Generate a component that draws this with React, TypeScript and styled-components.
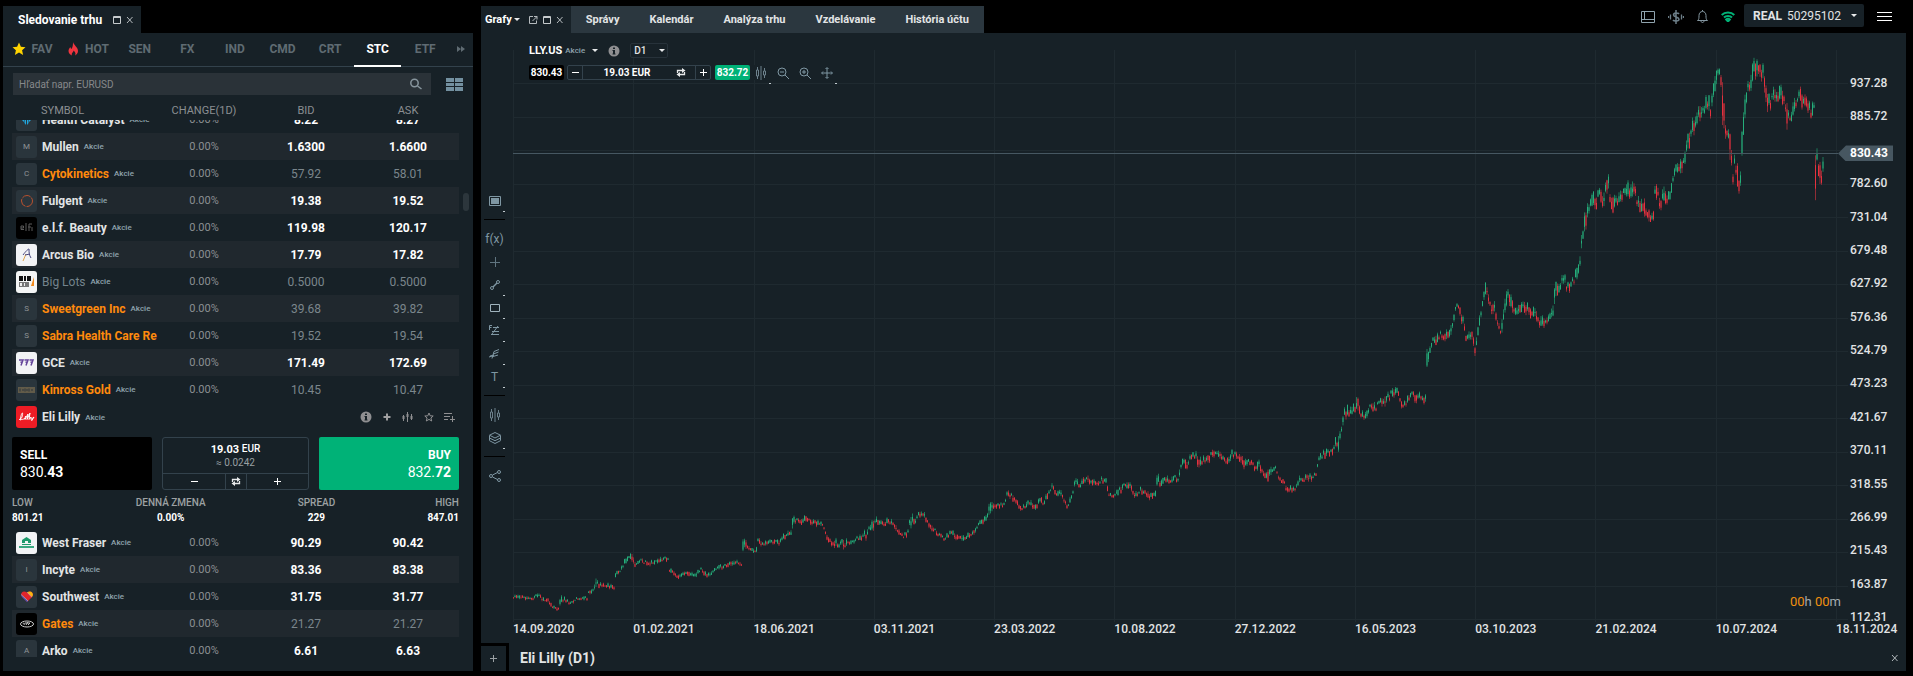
import React, { useLayoutEffect, useMemo, useRef } from "react";
import styled, { createGlobalStyle, css } from "styled-components";

const c = {
  panel: "#172127",
  row: "#20282e",
  tab: "#2b373f",
  line: "#33424c",
  text: "#e2e4e5",
  muted: "#7b868c",
  steel: "#7f97a3",
  orange: "#ff8a0d",
  green: "#00b277",
};

const GlobalStyle = createGlobalStyle`
  * { box-sizing: border-box; }
  body { margin: 0; background: #000; }
  body, button, input, select {
    font-family: Roboto, "Liberation Sans", sans-serif;
    font-size: 12px;
    color: ${c.text};
  }
  button { background: none; border: 0; padding: 0; cursor: pointer; }
  a { color: inherit; text-decoration: none; }
  svg { display: block; flex: none; }
`;

/* ---------- layout ---------- */

const Page = styled.div`
  display: grid;
  grid-template-columns: 470px minmax(0, 1fr);
  column-gap: 8px;
  height: 100vh;
  min-height: 600px;
  padding: 0 7px 5px 3px;
`;

const Column = styled.section`
  display: flex;
  flex-direction: column;
  min-width: 0;
  min-height: 0;
`;

const Head = styled.header`
  display: flex;
  align-items: flex-end;
  height: 33px;
  flex: none;
`;

const Panel = styled.div`
  position: relative;
  display: flex;
  flex-direction: column;
  flex: 1;
  min-height: 0;
  background: ${c.panel};
`;

const WindowTab = styled.div<{ $wide?: boolean }>`
  display: flex;
  align-items: center;
  gap: ${(p) => (p.$wide ? "11px" : "4px")};
  height: 27px;
  padding: 0 7px 0 ${(p) => (p.$wide ? "15px" : "4px")};
  background: ${c.panel};
  font-weight: 700;
`;

const TabTools = styled.div`
  display: flex;
  align-items: center;
  gap: 5px;
`;

const TabName = styled.button`
  display: flex;
  align-items: center;
  gap: 2px;
  margin-right: 6px;
  font-size: 11px;
  font-weight: 700;
  color: #fff;
`;

const TabTitle = styled.h1`
  margin: 0;
  font-size: 12px;
  font-weight: 700;
  color: #fff;
`;

/* ---------- market watch ---------- */

const Groups = styled.nav`
  display: flex;
  height: 34px;
  border-bottom: 1px solid ${c.line};
`;

const Group = styled.button<{ $active?: boolean; $width?: number }>`
  display: flex;
  align-items: center;
  justify-content: center;
  gap: 6px;
  ${(p) => (p.$width ? css`width: ${p.$width}px;` : css`flex: 1;`)}
  height: 34px;
  border-bottom: 2px solid ${(p) => (p.$active ? "#fff" : "transparent")};
  color: ${(p) => (p.$active ? "#fff" : "#5f6b72")};
  font-weight: 700;
`;

const SearchRow = styled.div`
  display: flex;
  align-items: center;
  gap: 15px;
  padding: 6px 10px 3px;
`;

const SearchBox = styled.label`
  display: flex;
  align-items: center;
  flex: 1;
  height: 22px;
  padding: 0 9px 0 6px;
  background: #2a3238;
`;

const SearchInput = styled.input`
  flex: 1;
  min-width: 0;
  border: 0;
  padding: 0;
  outline: 0;
  background: none;
  font-size: 10px;
  &::placeholder { color: #87898b; opacity: 1; }
`;

const Scroller = styled.div`
  flex: 1;
  min-height: 0;
  overflow: hidden;
  margin: 0 14px 14px 9px;
`;

const Thumb = styled.div`
  position: absolute;
  right: 4px;
  top: 160px;
  width: 6px;
  height: 18px;
  border-radius: 3px;
  background: #2c363c;
`;

const Quotes = styled.table`
  width: 100%;
  border-collapse: collapse;
  table-layout: fixed;
`;

const HeadCell = styled.th<{ $first?: boolean }>`
  position: sticky;
  top: 0;
  z-index: 1;
  width: ${(p) => (p.$first ? "141px" : "auto")};
  height: 22px;
  padding: 2px 0 0 ${(p) => (p.$first ? "29px" : "0")};
  background: ${c.panel};
  color: #8b8f92;
  font-size: 11px;
  font-weight: 400;
  text-align: ${(p) => (p.$first ? "left" : "center")};
`;

const Row = styled.tr<{ $alt?: boolean }>`
  height: 27px;
  background: ${(p) => (p.$alt ? c.row : "transparent")};
`;

const Cell = styled.td<{ $strong?: boolean }>`
  height: 27px;
  padding: 0;
  color: ${(p) => (p.$strong ? "#fff" : c.muted)};
  font-weight: ${(p) => (p.$strong ? 700 : 400)};
  text-align: center;
  line-height: 14px;
`;

const ChangeCell = styled(Cell)`
  font-size: 11px;
  color: #8b8f92;
`;

const SymbolBox = styled.div`
  display: flex;
  align-items: center;
  gap: 5px;
  padding-left: 4px;
  white-space: nowrap;
`;

const SymbolName = styled.span<{ $tone: Tone }>`
  font-size: 12px;
  line-height: 16px;
  font-weight: ${(p) => (p.$tone === "dim" ? 400 : 700)};
  color: ${(p) => (p.$tone === "orange" ? c.orange : p.$tone === "dim" ? "#74848d" : c.text)};
`;

const Kind = styled.span`
  padding-top: 1px;
  color: #8fa3ad;
  font-size: 8px;
  font-weight: 500;
  line-height: 12px;
`;

const Logo = styled.span<{ $bg?: string }>`
  display: flex;
  align-items: center;
  justify-content: center;
  flex: none;
  width: 21px;
  height: 22px;
  border-radius: 3px;
  background: ${(p) => p.$bg ?? "#2a353c"};
  color: #8f9496;
  font-size: 8px;
`;

const Details = styled.div`
  display: flex;
  flex-direction: column;
  height: 126px;
`;

const DetailsHead = styled.div`
  display: flex;
  align-items: center;
  justify-content: space-between;
  height: 28px;
`;

const Actions = styled.div`
  display: flex;
  align-items: center;
  gap: 2px;
`;

const IconButton = styled.button<{ $size?: number }>`
  display: flex;
  align-items: center;
  justify-content: center;
  width: ${(p) => p.$size ?? 19}px;
  height: 20px;
`;

const Deal = styled.div`
  display: grid;
  grid-template-columns: 140px 1fr 140px;
  gap: 10px;
  height: 53px;
  margin-top: 6px;
`;

const DealButton = styled.button<{ $buy?: boolean }>`
  display: flex;
  flex-direction: column;
  justify-content: center;
  align-items: ${(p) => (p.$buy ? "flex-end" : "flex-start")};
  padding: 0 8px;
  border-radius: 2px;
  background: ${(p) => (p.$buy ? c.green : "#000")};
  color: #fff;
`;

const Side = styled.span`
  font-size: 12px;
  font-weight: 700;
  line-height: 17px;
`;

const Price = styled.span`
  font-size: 14px;
  line-height: 17px;
`;

const Volume = styled.div`
  display: flex;
  flex-direction: column;
  border: 1px solid ${c.line};
  border-radius: 3px;
`;

const VolumeLine = styled.label`
  display: flex;
  justify-content: center;
  align-items: center;
  gap: 3px;
  height: 16px;
  margin-top: 3px;
  color: #fff;
  font-size: 10px;
  font-weight: 500;
`;

const VolumeInput = styled.input`
  width: 28px;
  padding: 0;
  border: 0;
  background: none;
  color: #fff;
  font-size: 11px;
  font-weight: 700;
  text-align: right;
`;

const Approx = styled.div`
  flex: 1;
  color: #9aa0a3;
  font-size: 10px;
  line-height: 11px;
  text-align: center;
`;

const Steps = styled.div`
  display: grid;
  grid-template-columns: 1fr 21px 1fr;
  height: 16px;
  border-top: 1px solid ${c.line};
`;

const Step = styled.button`
  display: flex;
  align-items: center;
  justify-content: center;
  & + & { border-left: 1px solid ${c.line}; }
`;

const Stats = styled.dl`
  display: flex;
  justify-content: space-between;
  margin: 5px 0 0;
  text-align: center;
`;

const Stat = styled.div<{ $align?: "left" | "right" }>`
  text-align: ${(p) => p.$align ?? "center"};
  dt { color: #9da1a3; font-size: 10px; font-weight: 500; line-height: 16px; }
  dd { margin: 0; color: #fff; font-size: 10px; font-weight: 700; line-height: 14px; }
`;

/* ---------- chart window ---------- */

const NavTabs = styled.nav`
  display: flex;
  height: 27px;
  background: ${c.tab};
  white-space: nowrap;
`;

const NavTab = styled.a`
  display: flex;
  align-items: center;
  padding: 0 15px;
  font-size: 11px;
  font-weight: 700;
`;

const TopTools = styled.div`
  display: flex;
  align-items: center;
  gap: 13px;
  height: 33px;
  margin-left: auto;
  padding-right: 14px;
`;

const Account = styled.button`
  display: flex;
  align-items: center;
  gap: 5px;
  width: 120px;
  height: 23px;
  margin: 0 0 2px -4px;
  padding: 0 7px 0 9px;
  border-radius: 2px;
  background: ${c.panel};
  & > svg { margin-left: auto; }
`;

const ChartBody = styled.div`
  display: flex;
  flex: 1;
  min-height: 0;
`;

const ToolColumn = styled.div`
  display: flex;
  flex-direction: column;
  justify-content: center;
  width: 32px;
  padding: 0 8px 0 3px;
`;

const Tool = styled.button<{ $more?: boolean }>`
  position: relative;
  display: flex;
  align-items: center;
  justify-content: center;
  height: 23px;
  width: 21px;
  color: ${c.steel};
  font-size: 12px;
  ${(p) => p.$more && css`
    &::after {
      content: "";
      position: absolute;
      right: 0;
      bottom: 0;
      width: 2px;
      height: 1px;
      background: #c3ccd0;
    }
  `}
`;

const Divider = styled.hr`
  width: 21px;
  height: 1px;
  margin: 7px 0;
  border: 0;
  background: #000;
`;

const Chart = styled.div`
  position: relative;
  display: grid;
  grid-template-columns: minmax(0, 1fr) 58px;
  grid-template-rows: minmax(0, 1fr) 21px;
  flex: 1;
  min-width: 0;
  margin-top: 17px;
`;

const Plot = styled.svg`
  width: 100%;
  height: 100%;
`;

const Prices = styled.div`
  grid-area: 1 / 2 / 3 / 3;
  display: flex;
  flex-direction: column;
  justify-content: space-between;
  padding: 27px 0 20px 2px;
  font-weight: 500;
  line-height: 12px;
`;

const PriceMark = styled.div`
  position: absolute;
  left: 0;
  right: 13px;
  display: flex;
  align-items: center;
  height: 16px;
  margin-top: -7px;
  &::before { content: ""; flex: 1; height: 1px; background: #465761; }
`;

const PriceTag = styled.span`
  width: 55px;
  height: 16px;
  padding-left: 12px;
  background: #475761;
  clip-path: polygon(0 50%, 8px 0, 100% 0, 100% 100%, 8px 100%);
  color: #fff;
  font-weight: 700;
  line-height: 16px;
`;

const Dates = styled.div`
  grid-area: 2 / 1 / 3 / 3;
  display: grid;
  grid-template-columns: repeat(11, minmax(0, 1fr)) 70px;
  padding-top: 1px;
  font-weight: 500;
  line-height: 12px;
  white-space: nowrap;
`;

const Countdown = styled.div`
  position: absolute;
  right: 65px;
  bottom: 33px;
  color: #a4acb0;
  font-size: 13px;
  line-height: 16px;
  b { color: #f0900f; font-weight: 400; }
`;

const Overlay = styled.div`
  position: absolute;
  left: 16px;
  top: -7px;
  display: flex;
  flex-direction: column;
  align-items: flex-start;
  gap: 7px;
`;

const OverlayRow = styled.div`
  display: flex;
  align-items: center;
  height: 15px;
  background: ${c.panel};
`;

const Instrument = styled.button`
  display: flex;
  align-items: center;
  gap: 3px;
  margin-right: 10px;
  & > svg { margin-left: 4px; }
`;

const Ticker = styled.span`
  color: #fff;
  font-size: 11px;
  font-weight: 700;
`;

const IntervalBox = styled.label`
  position: relative;
  display: flex;
  margin-left: 10px;
  & > svg { position: absolute; right: 3px; top: 6px; pointer-events: none; }
`;

const Interval = styled.select`
  width: 38px;
  height: 15px;
  padding: 0 3px;
  border: 1px solid #27323a;
  border-radius: 2px;
  appearance: none;
  background: ${c.panel};
  font-size: 10px;
  font-weight: 500;
`;

const Quick = styled.button<{ $buy?: boolean }>`
  width: 35px;
  height: 15px;
  border-radius: 2px;
  background: ${(p) => (p.$buy ? c.green : "#000")};
  color: #fff;
  font-size: 10px;
  font-weight: 700;
  line-height: 15px;
`;

const QuickVolume = styled.div`
  display: flex;
  align-items: stretch;
  width: 144px;
  height: 15px;
  margin: 0 4px 0 3px;
  border: 1px solid ${c.line};
  border-radius: 2px;
`;

const QuickStep = styled.button<{ $side?: "left" | "right" }>`
  display: flex;
  align-items: center;
  justify-content: center;
  width: ${(p) => (p.$side ? "15px" : "28px")};
  ${(p) => p.$side === "left" && css`border-right: 1px solid ${c.line};`}
  ${(p) => p.$side === "right" && css`border-left: 1px solid ${c.line};`}
`;

const QuickInput = styled.input`
  flex: 1;
  min-width: 0;
  padding: 0 0 0 4px;
  border: 0;
  background: none;
  color: #fff;
  font-size: 10px;
  font-weight: 700;
  text-align: center;
`;

const ViewTools = styled.div`
  display: flex;
  height: 15px;
  align-items: center;
  gap: 1px;
`;

const ChartTabs = styled.footer`
  display: flex;
  height: 28px;
`;

const AddTab = styled.button`
  display: flex;
  align-items: center;
  justify-content: center;
  width: 28px;
  border-top: 3px solid #000;
  border-right: 3px solid #000;
`;

const ChartName = styled.h2`
  flex: 1;
  margin: 0;
  padding-left: 11px;
  font-size: 14px;
  font-weight: 700;
  line-height: 30px;
`;

const CloseChart = styled.button`
  display: flex;
  align-items: center;
  justify-content: center;
  width: 22px;
  padding-top: 2px;
`;

/* ---------- icons ---------- */

type IconProps = {
  w?: number;
  h?: number;
  box?: string;
  color?: string;
  fill?: string;
  sw?: number;
  children: React.ReactNode;
};

const Icon = ({ w = 12, h = w, box, color = c.steel, fill = "none", sw = 1, children }: IconProps) => (
  <svg width={w} height={h} viewBox={box ?? `0 0 ${w} ${h}`} fill={fill} stroke={color} strokeWidth={sw} aria-hidden="true">
    {children}
  </svg>
);

const Caret = ({ color = "#e8eaeb", w = 6 }) => (
  <svg width={w} height={w / 2} viewBox="0 0 6 3" fill={color} aria-hidden="true"><path d="M0 0h6L3 3z" /></svg>
);
const MaxIcon = () => <Icon w={8} h={8} color="#c6cbcd"><path d="M.5 .5h7v7h-7zM0 1.500h8" /></Icon>;
const CloseIcon = () => <Icon w={8} h={8} color="#b5bbbe"><path d="M1 1l5.500 6M6.500 1L1 7" /></Icon>;
const PopIcon = () => <Icon w={9} h={8} color="#b5bbbe"><path d="M4 .5H.5v7h7V4.500M5 .5h3v3M8 .5L3.500 5" /></Icon>;
const PlusIcon = ({ color = "#fff", w = 7 }) => <Icon w={w} box="0 0 7 7" color={color}><path d="M3.500 0v7M0 3.500h7" /></Icon>;
const MinusIcon = () => <Icon w={7} color="#fff"><path d="M0 3.500h7" /></Icon>;
const SwapIcon = () => (
  <Icon w={10} h={9} color="#e8eaeb">
    <path d="M1.500 5V2.500h5M8.500 4v2.500h-5" strokeWidth="1.300" />
    <path d="M6 0l3.500 2.500L6 5zM4 4L.5 6.500 4 9z" fill="#e8eaeb" stroke="none" />
  </Icon>
);
const InfoIcon = () => (
  <svg width="12" height="12" viewBox="0 0 12 12" aria-hidden="true">
    <circle cx="6" cy="6" r="5.500" fill="#8f8f91" />
    <path d="M5 2.500h2v1.500H5zM4.500 5H7v3.500h.5v1h-3v-1H5V6h-.5z" fill={c.panel} />
  </svg>
);
const CandlesIcon = ({ color = "#8f8f91" }) => (
  <Icon w={10} h={14} color={color}>
    <path d="M1.500 1v3M1.500 10v3M.5 4h2v6h-2zM5 0v14M8.500 2v3M8.500 9v3M7.500 5h2v4h-2z" />
  </Icon>
);

/* ---------- market data ---------- */

type Tone = "light" | "orange" | "dim";
type Quote = { name: string; tone: Tone; bid: string; ask: string; logo: React.ReactNode; bg?: string; noKind?: boolean };

const art = {
  health: (
    <svg width="9" height="12" viewBox="0 0 9 12" fill="#21a6dd" aria-hidden="true">
      <path d="M0 2l2 1v5L0 6zM2.500 1l1.500 1v9L2.500 9zM5 2l1.500-1v8L5 11zM7 3l2-1v4L7 8z" />
    </svg>
  ),
  fulgent: <Icon w={14} color="#b9512e" sw={1}><circle cx="7" cy="7" r="5.500" strokeDasharray="9 1" /></Icon>,
  elf: <Icon w={13} h={9} color="#5b5b5b" sw={1}><path d="M4 6.500H1V3h2.500v2H1M6 0v8M9 8V1h3M8 4h3M12 4v4" /></Icon>,
  arcus: <Icon w={12} h={14} color="#47467e"><path d="M2 7C5 3 7 1 8 1c0 3 0 6 2 9" /><path d="M2 13l3-7" stroke="#e0a34a" /><path d="M4 7l5-1" /></Icon>,
  big: (
    <svg width="15" height="12" viewBox="0 0 15 12" aria-hidden="true">
      <path d="M0 0h4v5H0zM5 0h2v5H5zM8 0h4v5H8z" fill="#111" /><path d="M0 6h10v5H0z" fill="#777" />
      <path d="M1 7h2v3H1zM5 7h1v3H5z" fill="#eee" /><path d="M15 1v9h-3z" fill="#f28a1c" />
    </svg>
  ),
  gce: <Icon w={15} h={7} color="#65469b" sw={1.500}><path d="M0 1h4L2 6.500M5.500 1h3.500L7 6.500M10.500 1H14l-2 5.500M1.500 3l2 .5M6.500 3l2 .5M11.500 3l2 .5" /></Icon>,
  kinross: (
    <svg width="17" height="6" viewBox="0 0 17 6" aria-hidden="true">
      <path d="M0 0h17v6H0z" fill="#625b49" /><path d="M2 1.500v3M4 3h2M7 1.500v3M9 2v2M11 1.500v3M13 3h2" stroke="#2a353c" />
    </svg>
  ),
  west: (
    <svg width="15" height="12" viewBox="0 0 15 12" aria-hidden="true">
      <path d="M7.500 0L10.500 2l1.500 1v3H3V3l1.500-1z" fill="#1d9a6c" /><path d="M6 6V4h3v2z" fill="#f2f3f5" />
      <path d="M3 7h9v1H3z" fill="#1d9a6c" /><path d="M0 9h15v2H0z" fill="#3aa881" />
    </svg>
  ),
  southwest: (
    <svg width="12" height="11" viewBox="0 0 12 11" aria-hidden="true">
      <clipPath id="heart"><path d="M6 11L1 6C-1.500 3 1.500-1.500 6 1.500c4.500-3 7.500 1.500 5 4.500z" /></clipPath>
      <g clipPath="url(#heart)">
        <path d="M0 0h12v11H0z" fill="#e3242b" /><path d="M5 0h7v7z" fill="#f9b612" /><path d="M0 3.500L8 11H0z" fill="#304cb2" />
        <path d="M-1 2.500l9 8.500M4.500-.5L12 7.500" stroke="#c9ced4" strokeWidth=".6" />
      </g>
    </svg>
  ),
  gates: <Icon w={14} h={8} color="#c8c8c8"><ellipse cx="7" cy="4" rx="6.500" ry="3" /><path d="M3 4c1-2 2-1 1 1M6 5l2-3M8 5l2-2M5 3h5" /></Icon>,
  lilly: (
    <Icon w={17} h={10} color="#fff">
      <path d="M1 7.500c3 0 4-5 3.500-6.500C3 1 3 6 2 8c2-1 3 0 5-2M7.500 4L7 7.500 10 2 9 7.500 12 1 11 7.500 13 5l0 2.500L16 5l-2.500 4" />
    </Icon>
  ),
};

const quotes: Quote[] = [
  { name: "Health Catalyst", tone: "light", bid: "8.22", ask: "8.27", logo: art.health },
  { name: "Mullen", tone: "light", bid: "1.6300", ask: "1.6600", logo: "M" },
  { name: "Cytokinetics", tone: "orange", bid: "57.92", ask: "58.01", logo: "C" },
  { name: "Fulgent", tone: "light", bid: "19.38", ask: "19.52", logo: art.fulgent },
  { name: "e.l.f. Beauty", tone: "light", bid: "119.98", ask: "120.17", logo: art.elf, bg: "#000" },
  { name: "Arcus Bio", tone: "light", bid: "17.79", ask: "17.82", logo: art.arcus, bg: "#f2f3f5" },
  { name: "Big Lots", tone: "dim", bid: "0.5000", ask: "0.5000", logo: art.big, bg: "#f4f5f5" },
  { name: "Sweetgreen Inc", tone: "orange", bid: "39.68", ask: "39.82", logo: "S" },
  { name: "Sabra Health Care Re", tone: "orange", bid: "19.52", ask: "19.54", logo: "S", noKind: true },
  { name: "GCE", tone: "light", bid: "171.49", ask: "172.69", logo: art.gce, bg: "#f2f3f5" },
  { name: "Kinross Gold", tone: "orange", bid: "10.45", ask: "10.47", logo: art.kinross },
];

const moreQuotes: Quote[] = [
  { name: "West Fraser", tone: "light", bid: "90.29", ask: "90.42", logo: art.west, bg: "#f2f3f5" },
  { name: "Incyte", tone: "light", bid: "83.36", ask: "83.38", logo: "I" },
  { name: "Southwest", tone: "light", bid: "31.75", ask: "31.77", logo: art.southwest },
  { name: "Gates", tone: "orange", bid: "21.27", ask: "21.27", logo: art.gates, bg: "#000" },
  { name: "Arko", tone: "light", bid: "6.61", ask: "6.63", logo: "A" },
];

const QuoteRow = ({ q, alt }: { q: Quote; alt: boolean }) => (
  <Row $alt={alt}>
    <Cell>
      <SymbolBox>
        <Logo $bg={q.bg}>{q.logo}</Logo>
        <SymbolName $tone={q.tone}>{q.name}</SymbolName>
        {!q.noKind && <Kind>Akcie</Kind>}
      </SymbolBox>
    </Cell>
    <ChangeCell>0.00%</ChangeCell>
    <Cell $strong={q.tone === "light"}>{q.bid}</Cell>
    <Cell $strong={q.tone === "light"}>{q.ask}</Cell>
  </Row>
);

const LillyDetails = () => (
  <Details>
    <DetailsHead>
      <SymbolBox>
        <Logo $bg="#ee1c25">{art.lilly}</Logo>
        <SymbolName $tone="light">Eli Lilly</SymbolName>
        <Kind>Akcie</Kind>
      </SymbolBox>
      <Actions>
        <IconButton aria-label="Info"><InfoIcon /></IconButton>
        <IconButton aria-label="Pridať"><Icon w={8} color="#a0a0a1" sw={2}><path d="M4 .5v7M.5 4h7" /></Icon></IconButton>
        <IconButton aria-label="Graf">
          <Icon w={11} h={10} color="#8f8f91"><path d="M1.500 3v6M5.500 0v10M9.500 2v6" /><path d="M1.500 4v3M5.500 2v3M9.500 4v3" strokeWidth="2" /></Icon>
        </IconButton>
        <IconButton aria-label="Obľúbené">
          <Icon w={10} color="#8f8f91"><path d="M5 1l1.200 2.800 3 .2-2.300 2 .8 3L5 7.400 2.300 9l.8-3L.8 4l3-.2z" /></Icon>
        </IconButton>
        <IconButton aria-label="Do zoznamu">
          <Icon w={11} h={10} color="#8f8f91"><path d="M0 1.500h8M0 4.500h6M0 7.500h4M8.500 4v6M6 7.500h5" /></Icon>
        </IconButton>
      </Actions>
    </DetailsHead>
    <Deal>
      <DealButton>
        <Side>SELL</Side>
        <Price>830.<b>43</b></Price>
      </DealButton>
      <Volume>
        <VolumeLine>
          <VolumeInput aria-label="Objem" defaultValue="19.03" />EUR
        </VolumeLine>
        <Approx>≈ 0.0242</Approx>
        <Steps>
          <Step aria-label="Menej"><MinusIcon /></Step>
          <Step aria-label="Prepnúť"><SwapIcon /></Step>
          <Step aria-label="Viac"><PlusIcon /></Step>
        </Steps>
      </Volume>
      <DealButton $buy>
        <Side>BUY</Side>
        <Price>832.<b>72</b></Price>
      </DealButton>
    </Deal>
    <Stats>
      <Stat $align="left"><dt>LOW</dt><dd>801.21</dd></Stat>
      <Stat><dt>DENNÁ ZMENA</dt><dd>0.00%</dd></Stat>
      <Stat><dt>SPREAD</dt><dd>229</dd></Stat>
      <Stat $align="right"><dt>HIGH</dt><dd>847.01</dd></Stat>
    </Stats>
  </Details>
);

const MarketWatch = () => {
  const scroller = useRef<HTMLDivElement>(null);
  useLayoutEffect(() => {
    if (scroller.current) scroller.current.scrollTop = 14;
  }, []);
  return (
    <Column>
      <Head>
        <WindowTab $wide>
          <TabTitle>Sledovanie trhu</TabTitle>
          <TabTools>
            <IconButton $size={8} aria-label="Maximalizovať"><MaxIcon /></IconButton>
            <IconButton $size={8} aria-label="Zavrieť"><CloseIcon /></IconButton>
          </TabTools>
        </WindowTab>
      </Head>
      <Panel>
        <Groups>
          <Group $width={58}>
            <svg width="14" height="14" viewBox="0 0 14 14" aria-hidden="true">
              <path d="M7 .5l1.900 4.200 4.600.5-3.400 3.100 1 4.600L7 10.600l-4.100 2.300 1-4.600L.5 5.200l4.600-.5z" fill="#ffd400" />
            </svg>
            FAV
          </Group>
          <Group $width={55}>
            <svg width="11" height="14" viewBox="0 0 11 14" aria-hidden="true">
              <path d="M5 0c.5 3 5 5 5 9 0 2-1.500 4-3 4.500C8 12 7.500 10 5.500 8.500 5.500 10.500 3 11 4 13.500 2 13 .5 11 .5 9c0-2 1-3 2-4 0 1 .3 1.500 1 2C5 5 5 2 5 0z" fill="#f0353f" />
            </svg>
            HOT
          </Group>
          {["SEN", "FX", "IND", "CMD", "CRT", "STC", "ETF"].map((g) => (
            <Group key={g} $active={g === "STC"}>{g}</Group>
          ))}
          <Group $width={24} aria-label="Ďalšie">
            <svg width="8" height="6" viewBox="0 0 8 6" fill="#5f6b72" aria-hidden="true"><path d="M0 0l4 3-4 3zM4 0l4 3-4 3z" /></svg>
          </Group>
        </Groups>
        <SearchRow>
          <SearchBox>
            <SearchInput aria-label="Hľadať" placeholder="Hľadať napr. EURUSD" />
            <Icon w={12} color="#87959d" sw={1.500}><circle cx="4.500" cy="5" r="3.700" /><path d="M7.500 8l4 3" /></Icon>
          </SearchBox>
          <IconButton $size={17} aria-label="Zobrazenie">
            <svg width="17" height="13" viewBox="0 0 17 13" fill="#7390a0" aria-hidden="true">
              <path d="M0 0h8v4H0zM9 0h8v4H9zM0 5h8v3H0zM9 5h8v3H9zM0 9h8v4H0zM9 9h8v4H9z" />
            </svg>
          </IconButton>
        </SearchRow>
        <Scroller ref={scroller}>
          <Quotes>
            <thead>
              <tr>
                <HeadCell $first>SYMBOL</HeadCell>
                <HeadCell>CHANGE(1D)</HeadCell>
                <HeadCell>BID</HeadCell>
                <HeadCell>ASK</HeadCell>
              </tr>
            </thead>
            <tbody>
              {quotes.map((q, i) => <QuoteRow key={q.name} q={q} alt={i % 2 === 1} />)}
              <tr><Cell colSpan={4}><LillyDetails /></Cell></tr>
              {moreQuotes.map((q, i) => <QuoteRow key={q.name} q={q} alt={i % 2 === 1} />)}
            </tbody>
          </Quotes>
        </Scroller>
        <Thumb />
      </Panel>
    </Column>
  );
};

/* ---------- chart data ---------- */

// Turning points of the daily series: position, middle of the range, optional half range.
const turns: number[][] = [
  [513, 597], [518, 596], [532, 599], [537, 594], [544, 600], [550, 602], [552, 607], [558, 608], [559, 600, 6], [564, 599],
  [570, 603], [576, 599], [587, 598], [589, 592], [593, 590], [596, 583, 4], [600, 585], [614, 587], [615, 575], [621, 570],
  [625, 561], [628, 557], [632, 558, 5], [635, 564], [641, 561], [650, 563], [658, 560], [660, 561, 4], [664, 558], [668, 560], [669, 570],
  [678, 576], [685, 572], [694, 576], [701, 569], [708, 576], [716, 568], [726, 566], [732, 562], [741, 564], [742, 552, 11],
  [745, 546, 6], [748, 549], [757, 551], [758, 541], [762, 544], [771, 541], [778, 543], [784, 536], [791, 534], [793, 522, 6],
  [796, 519], [800, 523], [805, 517], [812, 522], [823, 526], [826, 536], [832, 543], [841, 545, 6], [850, 543], [858, 538],
  [866, 534, 6], [868, 529], [873, 523, 6], [876, 520], [882, 524], [889, 521], [894, 525], [898, 533], [904, 536], [908, 532],
  [910, 518, 9], [914, 523], [919, 513], [924, 514], [928, 523], [937, 533], [944, 539], [951, 533], [957, 537], [962, 539],
  [967, 537], [973, 532], [980, 523], [985, 519], [990, 508, 6], [996, 506], [1003, 505], [1008, 493], [1014, 498],
  [1022, 509], [1027, 503], [1037, 506], [1041, 498, 6], [1043, 504], [1052, 487], [1057, 496], [1060, 491], [1065, 503],
  [1068, 506], [1072, 495], [1075, 481], [1079, 485], [1087, 479], [1095, 483], [1102, 480], [1106, 482], [1108, 493],
  [1112, 498], [1117, 493], [1123, 486], [1130, 487], [1135, 496], [1141, 489], [1145, 493], [1152, 497], [1156, 491],
  [1157, 477, 6], [1161, 485], [1165, 478], [1170, 482], [1173, 477], [1178, 480], [1182, 462], [1187, 464, 7], [1192, 457],
  [1196, 456], [1198, 466, 6], [1203, 460], [1210, 457], [1213, 452], [1219, 453], [1227, 461], [1232, 455], [1238, 455],
  [1245, 463, 6], [1250, 461], [1255, 469], [1258, 465, 6], [1263, 472], [1266, 478, 8], [1272, 472], [1276, 467], [1279, 480],
  [1283, 481], [1287, 489], [1295, 489], [1300, 480], [1310, 478], [1316, 473], [1319, 457], [1325, 453], [1332, 452],
  [1335, 443], [1338, 445, 8], [1340, 434, 7], [1342, 428], [1344, 414, 7], [1350, 412], [1353, 409], [1359, 404, 8], [1361, 414],
  [1365, 417], [1372, 404], [1375, 408], [1383, 400], [1388, 397, 6], [1393, 391], [1398, 392], [1402, 407], [1406, 403],
  [1411, 393], [1415, 398], [1420, 397], [1425, 400], [1426, 356, 12], [1430, 352], [1434, 338], [1437, 342], [1439, 335],
  [1447, 335], [1452, 329], [1455, 309], [1458, 305], [1462, 321], [1464, 323], [1466, 336], [1472, 338], [1475, 350, 7],
  [1478, 333], [1482, 307], [1485, 292, 7], [1488, 295], [1491, 312], [1495, 309], [1498, 323], [1501, 332], [1504, 313, 9],
  [1507, 298, 10], [1512, 301, 9], [1514, 311], [1520, 307], [1527, 308], [1532, 313], [1536, 313, 8], [1540, 322], [1547, 320],
  [1553, 312], [1555, 291, 10], [1560, 284], [1564, 277], [1567, 288], [1571, 285], [1577, 273], [1580, 259], [1582, 241, 9],
  [1584, 222, 12], [1588, 213], [1592, 200], [1593, 188, 12], [1595, 203, 9], [1600, 193], [1603, 204], [1606, 182, 7], [1609, 186, 7],
  [1612, 210, 9], [1617, 201], [1623, 193], [1628, 187, 8], [1630, 197, 7], [1634, 190, 8], [1638, 203], [1645, 203, 9], [1647, 214, 8],
  [1652, 219], [1654, 211], [1655, 187, 9], [1658, 195, 8], [1660, 209], [1663, 190, 7], [1668, 201], [1672, 188, 8], [1675, 168, 7],
  [1679, 172, 7], [1685, 154], [1690, 136, 8], [1693, 126, 9], [1698, 114], [1703, 107, 7], [1708, 103], [1710, 111, 9], [1715, 88, 8],
  [1719, 71, 7], [1721, 78, 6], [1723, 122, 28], [1725, 131, 8], [1728, 127, 9], [1730, 155, 18], [1733, 174, 10], [1735, 158, 8],
  [1738, 184, 22], [1740, 190, 8], [1742, 142, 18], [1744, 112, 14], [1748, 90, 8], [1752, 75, 10], [1754, 68, 8], [1758, 70, 9],
  [1761, 77, 6], [1763, 70, 8], [1767, 100, 12], [1770, 105, 6], [1773, 90, 9], [1777, 101, 6], [1782, 92, 10], [1785, 103, 6], [1787, 121, 13],
  [1790, 116, 6], [1793, 112], [1797, 98, 6], [1799, 91, 7], [1802, 99, 8], [1806, 101], [1810, 111], [1814, 106],
  [1815, 163, 29], [1816, 142, 9], [1818, 167, 7], [1821, 179, 15], [1823, 170, 10], [1824, 158, 15],
];

function buildCandles() {
  let seed = 7;
  const rnd = () => {
    seed = (seed * 16807) % 2147483647;
    return seed / 2147483647;
  };
  const out = { upWick: "", downWick: "", upBody: "", downBody: "" };
  let last = turns[0][1];
  let t = 0;
  for (let x = 513.5; x <= 1824; x += 1.5) {
    while (t < turns.length - 2 && turns[t + 1][0] <= x) t += 1;
    const [x0, y0, r0] = turns[t];
    const [x1, y1, r1] = turns[t + 1];
    const k = Math.min(1, (x - x0) / (x1 - x0));
    const gap = x1 - x0 <= 1;
    const base = (y: number) => 2 + ((608 - y) / 540) * 6;
    const a = r0 ?? base(y0);
    const b = r1 ?? base(y1);
    const mid = gap ? y0 : y0 + (y1 - y0) * k;
    const size = gap ? a : a + (b - a) * k;
    const half = size * (0.35 + rnd() * 0.7);
    const shift = (rnd() - 0.5) * size * 1.2;
    const top = mid + shift - half;
    const bottom = mid + shift + half;
    const up = mid + shift + (rnd() - 0.5) * 3 < last;
    last = mid + shift;
    const at = x.toFixed(1);
    const bodyTop = top + (bottom - top) * rnd() * 0.5;
    const bodyBottom = bottom - (bottom - top) * rnd() * 0.4;
    const wick = `M${at} ${top.toFixed(1)}V${bottom.toFixed(1)}`;
    const body = `M${at} ${bodyTop.toFixed(1)}V${bodyBottom.toFixed(1)}`;
    if (up) {
      out.upWick += wick;
      out.upBody += body;
    } else {
      out.downWick += wick;
      out.downBody += body;
    }
  }
  return out;
}

const prices = [
  "937.28", "885.72", "", "782.60", "731.04", "679.48", "627.92", "576.36", "524.79",
  "473.23", "421.67", "370.11", "318.55", "266.99", "215.43", "163.87", "112.31",
];
const dates = [
  "14.09.2020", "01.02.2021", "18.06.2021", "03.11.2021", "23.03.2022", "10.08.2022",
  "27.12.2022", "16.05.2023", "03.10.2023", "21.02.2024", "10.07.2024", "18.11.2024",
];

const topPrice = 937.28;
const priceToPercent = (p: number) => ((33 + ((topPrice - p) / 51.56) * 33.53) / 572) * 100;

const PricePlot = () => {
  const k = useMemo(buildCandles, []);
  return (
    <Plot viewBox="513 50 1335 572" preserveAspectRatio="none" role="img" aria-label="Eli Lilly D1">
      <g stroke="#1f2a30" shapeRendering="crispEdges">
        {prices.map((_, i) => <path key={i} d={`M513 ${Math.round(83 + i * 33.53) + 0.5}H1848`} />)}
        {dates.map((_, i) => <path key={i} d={`M${Math.round(513 + i * 120.27) + 0.5} 50V622`} />)}
      </g>
      <path d={k.upWick} stroke="#1f8a63" strokeOpacity="0.85" />
      <path d={k.downWick} stroke="#a52f3a" strokeOpacity="0.85" />
      <path d={k.upBody} stroke="#27b47e" strokeOpacity="0.9" />
      <path d={k.downBody} stroke="#f0323f" strokeOpacity="0.9" />
    </Plot>
  );
};

const tools: { label: string; more?: boolean; icon: React.ReactNode }[] = [
  { label: "Funkcie", icon: "f(x)" },
  { label: "Kurzor", icon: <Icon w={10} color="#607580"><path d="M5.500 0v10M0 5.500h10" /></Icon> },
  { label: "Čiara", more: true, icon: <Icon w={10}><circle cx="2" cy="8" r="1.500" /><circle cx="8" cy="2" r="1.500" /><path d="M3 7l4-4" strokeWidth="1.500" /></Icon> },
  { label: "Obdĺžnik", more: true, icon: <Icon w={10} h={8} color="#9fb3bd"><path d="M.5.5h9v7h-9z" /></Icon> },
  { label: "Fibonacci", more: true, icon: <Icon w={11} h={11}><path d="M.5 5V.5H3M.5 2.500h2M4 2.500h6M3 6.500h7M2 9.500h8M9 1L3 9" /></Icon> },
  { label: "Vidly", more: true, icon: <Icon w={11} h={10}><path d="M0 8l5-1.500M3 9.500l2-7 5-2M4.500 5l5-2M4 7.500l5-1.500M1 7l4-1" /></Icon> },
  { label: "Text", more: true, icon: "T" },
];

const ChartWindow = () => (
  <Column>
    <Head>
      <WindowTab>
        <TabName>Grafy <Caret w={6} /></TabName>
        <TabTools>
          <IconButton $size={8} aria-label="Nové okno"><PopIcon /></IconButton>
          <IconButton $size={8} aria-label="Maximalizovať"><MaxIcon /></IconButton>
          <IconButton $size={8} aria-label="Zavrieť"><CloseIcon /></IconButton>
        </TabTools>
      </WindowTab>
      <NavTabs>
        {["Správy", "Kalendár", "Analýza trhu", "Vzdelávanie", "História účtu"].map((n) => (
          <NavTab key={n} href="#">{n}</NavTab>
        ))}
      </NavTabs>
      <TopTools>
        <IconButton $size={14} aria-label="Rozloženie">
          <Icon w={14} h={12} color="#8fa3ad"><path d="M.5.5h13v11H.5zM3.500.5v8M1 8.500h12" /></Icon>
        </IconButton>
        <IconButton $size={16} aria-label="Vklad">
          <Icon w={16} h={14} color="#6d7f89">
            <path d="M11 4C10 2.500 5.500 2.500 5.500 5c0 2 5.500 2 5.500 4.200C11 11.500 6 11.500 5 10M8 0v14" strokeWidth="1.500" />
            <path d="M2.500 4.500v5M.5 6v2M13.500 4.500v5M15.500 6v2" strokeWidth="1.300" />
          </Icon>
        </IconButton>
        <IconButton $size={11} aria-label="Upozornenia">
          <Icon w={11} h={13} color="#8497a1"><path d="M.5 10.500C2 9.500 2 8 2 5.500c0-2.500 1.500-4 3.500-4S9 3 9 5.500c0 2.500 0 4 1.500 5zM4 11c0 2 3 2 3 0M5.500 0v1" /></Icon>
        </IconButton>
        <IconButton $size={14} aria-label="Pripojenie">
          <Icon w={14} h={11} color="#00b277" sw={2}><path d="M.7 4C4 .8 10 .8 13.300 4M3 6.500c2-2 6-2 8 0M5.200 8.500c1-1 2.600-1 3.600 0L7 10.500z" /></Icon>
        </IconButton>
        <Account><b>REAL</b> 50295102 <Caret /></Account>
        <IconButton $size={15} aria-label="Menu">
          <Icon w={15} h={10} color="#fff"><path d="M0 .5h15M0 4.500h15M0 8.500h15" /></Icon>
        </IconButton>
      </TopTools>
    </Head>
    <Panel>
      <ChartBody>
        <ToolColumn>
          <Tool $more aria-label="Vzhľad"><Icon w={12} h={10}><path d="M.5.5h11v9H.5z" /><path d="M2 2h8v6H2z" fill={c.steel} stroke="none" /></Icon></Tool>
          <Divider />
          {tools.map((t) => <Tool key={t.label} $more={t.more} aria-label={t.label}>{t.icon}</Tool>)}
          <Divider />
          <Tool aria-label="Sviečky"><CandlesIcon color="#6d818c" /></Tool>
          <Tool $more aria-label="Vrstvy">
            <Icon w={12} h={12}><path d="M6 .5l5.500 2.700L6 6 .5 3.200zM.5 6L6 8.700 11.500 6M.5 8.700L6 11.500l5.500-2.800M.5 3.500v5M11.500 3.500v5" /></Icon>
          </Tool>
          <Divider />
          <Tool aria-label="Zdieľať">
            <Icon w={12} h={12}><circle cx="2" cy="6" r="1.500" /><circle cx="10" cy="2" r="1.500" /><circle cx="10" cy="10" r="1.500" /><path d="M3.500 5l5-2.500M3.500 7l5 2.500" /></Icon>
          </Tool>
        </ToolColumn>
        <Chart>
          <PricePlot />
          <Prices>{prices.map((p, i) => <span key={i}>{p || "\u00a0"}</span>)}</Prices>
          <Dates>{dates.map((d) => <span key={d}>{d}</span>)}</Dates>
          <PriceMark style={{ top: `calc((100% - 21px) * ${priceToPercent(830.43) / 100})` }}>
            <PriceTag>830.43</PriceTag>
          </PriceMark>
          <Countdown><b>00</b>h <b>00</b>m</Countdown>
          <Overlay>
            <OverlayRow>
              <Instrument>
                <Ticker>LLY.US</Ticker><Kind>Akcie</Kind><Caret />
              </Instrument>
              <IconButton $size={12} aria-label="Info"><InfoIcon /></IconButton>
              <IntervalBox>
                <Interval aria-label="Interval" defaultValue="D1"><option>D1</option></Interval>
                <Caret />
              </IntervalBox>
            </OverlayRow>
            <OverlayRow>
              <Quick>830.43</Quick>
              <QuickVolume>
                <QuickStep $side="left" aria-label="Menej"><MinusIcon /></QuickStep>
                <QuickInput aria-label="Objem" defaultValue="19.03 EUR" />
                <QuickStep aria-label="Prepnúť"><SwapIcon /></QuickStep>
                <QuickStep $side="right" aria-label="Viac"><PlusIcon /></QuickStep>
              </QuickVolume>
              <Quick $buy>832.72</Quick>
              <ViewTools>
                <Tool $more aria-label="Typ grafu"><CandlesIcon color="#6d818c" /></Tool>
                <Tool aria-label="Oddialiť"><Icon w={12}><circle cx="5" cy="5" r="4" /><path d="M3 5h4M8 8l4 4" /></Icon></Tool>
                <Tool aria-label="Priblížiť"><Icon w={12}><circle cx="5" cy="5" r="4" /><path d="M3 5h4M5 3v4M8 8l4 4" /></Icon></Tool>
                <Tool $more aria-label="Posun"><Icon w={12}><path d="M6 1v10M1 6h10M4.500 2L6 .5 7.500 2M4.500 10L6 11.500 7.500 10M2 4.500L.5 6 2 7.500M10 4.500L11.500 6 10 7.500" /></Icon></Tool>
              </ViewTools>
            </OverlayRow>
          </Overlay>
        </Chart>
      </ChartBody>
      <ChartTabs>
        <AddTab aria-label="Nový graf"><PlusIcon color="#9aa0a3" /></AddTab>
        <ChartName>Eli Lilly (D1)</ChartName>
        <CloseChart aria-label="Zavrieť graf"><CloseIcon /></CloseChart>
      </ChartTabs>
    </Panel>
  </Column>
);

export default function App() {
  return (
    <>
      <GlobalStyle />
      <Page>
        <MarketWatch />
        <ChartWindow />
      </Page>
    </>
  );
}
